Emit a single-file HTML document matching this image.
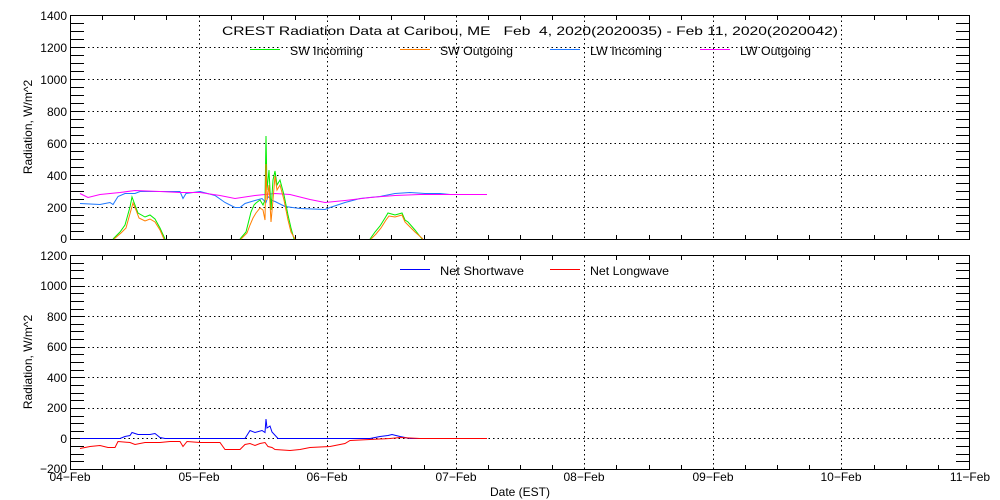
<!DOCTYPE html>
<html><head><meta charset="utf-8"><style>
html,body{margin:0;padding:0;background:#fff;}
svg{display:block;font-family:"Liberation Sans",sans-serif;font-size:12px;}
</style></head><body>
<svg id="s" width="1000" height="500" viewBox="0 0 1000 500" xmlns="http://www.w3.org/2000/svg">
<rect width="1000" height="500" fill="#fff"/>
<g id="grid"></g>
<rect x="70.5" y="15.5" width="899" height="224" fill="none" stroke="#000" stroke-width="1"/>
<rect x="70.5" y="255.5" width="899" height="214" fill="none" stroke="#000" stroke-width="1"/>
<g fill="none" stroke-width="1">
<polyline stroke="#1e78ff" points="80,203.5 100,204.5 110,202.5 113,204.5 118,196.5 125,193.5 135,193.5 140,191.5 180,191.5 183,198.5 186,193.5 200,191.5 215,195.5 225,202.5 235,207.5 240,207.5 245,203.5 255,200.5 262,198.5 266,202.5 268,196.5 272,200.5 275,201.5 285,206.5 300,208.5 325,209.5 330,207.5 345,202.5 360,198.5 380,196.5 395,193.5 410,192.5 425,193.5 440,193.5 450,194.5"/>
<polyline stroke="#ff00ff" points="80,193.5 88,197.5 100,194.5 120,192.5 135,190.5 160,191.5 180,192.5 200,192.5 220,195.5 235,198.5 255,195.5 275,193.5 290,194.5 310,199.5 325,202.5 345,200.5 370,197.5 395,195.5 420,194.5 456,194.5 487,194.5"/>
<polyline stroke="#00ee00" points="113,239 120,232 125,225 130,207 132,197 135,205 138,213 145,217 150,215 155,219 160,228 165,239"/>
<polyline stroke="#ff7f00" points="114,239 121,233 126,228 131,210 133,203 136,210 139,218 145,221 150,219 155,222 160,230 164,239"/>
<polyline stroke="#00ee00" points="240,239 246,232 249,220 251,212 254,205 256,203 260,200 263,205 265,200 266,136 267,190 269,170 271,210 273,180 275,171 277,185 280,180 284,195 288,215 291,228 294,239"/>
<polyline stroke="#ff7f00" points="241,239 247,233 250,225 253,218 256,213 260,208 263,210 265,220 266,164 267,200 269,185 271,222 273,200 275,176 277,190 280,185 284,200 288,220 291,232 295,239"/>
<polyline stroke="#00ee00" points="370,239 375,232 380,226 385,218 388,213 395,215 402,213 405,220 408,222 415,230 422,239"/>
<polyline stroke="#ff7f00" points="371,239 376,234 381,228 386,220 389,216 395,217 402,215 405,222 408,225 415,232 423,239"/>
</g>
<g fill="none" stroke-width="1">
<polyline stroke="#0000ff" points="80,438.5 120,438.5 125,436.5 130,435.5 132,432.5 138,434.5 150,434.5 155,433.5 160,437.5 165,438.5 245,438.5 250,430.5 255,432.5 262,430.5 265,432.5 266,419 267,428 270,426 272,432 278,438.5 370,438.5 380,436.5 388,435.5 392,434.5 400,436.5 410,438.5 440,438.5"/>
<polyline stroke="#ff0000" points="80,448.5 90,446.5 100,445.5 108,447.5 115,447.5 118,441.5 130,442.5 135,444.5 145,442.5 160,442.5 170,441.5 180,441.5 183,446.5 187,441.5 200,442.5 220,442.5 225,449.5 240,449.5 245,444.5 250,443.5 255,445.5 260,443.5 265,442.5 268,446.5 272,447.5 275,449.5 290,450.5 300,449.5 310,447.5 330,446.5 345,443.5 350,440.5 370,439.5 390,438.5 400,437.5 420,438.5 487,438.5"/>
</g>
<text x="222" y="35" textLength="616" lengthAdjust="spacingAndGlyphs" xml:space="preserve">CREST Radiation Data at Caribou, ME   Feb  4, 2020(2020035) - Feb 11, 2020(2020042)</text>
<g stroke-width="1">
<line x1="250" y1="49.5" x2="280" y2="49.5" stroke="#00ee00"/>
<line x1="400" y1="49.5" x2="430" y2="49.5" stroke="#ff7f00"/>
<line x1="550" y1="49.5" x2="580" y2="49.5" stroke="#1e78ff"/>
<line x1="700" y1="49.5" x2="730" y2="49.5" stroke="#ff00ff"/>
<line x1="400" y1="269.5" x2="430" y2="269.5" stroke="#0000ff"/>
<line x1="550" y1="269.5" x2="580" y2="269.5" stroke="#ff0000"/>
</g>
<text x="290" y="55" textLength="73" lengthAdjust="spacingAndGlyphs">SW Incoming</text>
<text x="440" y="55" textLength="73" lengthAdjust="spacingAndGlyphs">SW Outgoing</text>
<text x="590" y="55" textLength="72" lengthAdjust="spacingAndGlyphs">LW Incoming</text>
<text x="740" y="55" textLength="71" lengthAdjust="spacingAndGlyphs">LW Outgoing</text>
<text x="440" y="275" textLength="84" lengthAdjust="spacingAndGlyphs">Net Shortwave</text>
<text x="590" y="275" textLength="79" lengthAdjust="spacingAndGlyphs">Net Longwave</text>
<g text-anchor="end">
<text x="67" y="20">1400</text><text x="67" y="52">1200</text><text x="67" y="84">1000</text>
<text x="67" y="116">800</text><text x="67" y="148">600</text><text x="67" y="180">400</text>
<text x="67" y="212">200</text><text x="67" y="243">0</text>
<text x="67" y="260">1200</text><text x="67" y="290">1000</text><text x="67" y="321">800</text>
<text x="67" y="351">600</text><text x="67" y="382">400</text><text x="67" y="412">200</text>
<text x="67" y="443">0</text><text x="67" y="473">−200</text>
</g>
<g text-anchor="middle">
<text x="70" y="481">04−Feb</text><text x="199" y="481">05−Feb</text><text x="327" y="481">06−Feb</text>
<text x="456" y="481">07−Feb</text><text x="584" y="481">08−Feb</text><text x="713" y="481">09−Feb</text>
<text x="841" y="481">10−Feb</text><text x="970" y="481">11−Feb</text>
<text x="520" y="496">Date (EST)</text>
<text transform="translate(32,127) rotate(-90)">Radiation, W/m^2</text>
<text transform="translate(32,362) rotate(-90)">Radiation, W/m^2</text>
</g>
</svg>
<script>
(function(){
var g=document.getElementById('grid'),ns='http://www.w3.org/2000/svg';
function L(x1,y1,x2,y2,dash){var l=document.createElementNS(ns,'line');l.setAttribute('x1',x1);l.setAttribute('y1',y1);l.setAttribute('x2',x2);l.setAttribute('y2',y2);l.setAttribute('stroke','#000');l.setAttribute('stroke-width','1');if(dash)l.setAttribute('stroke-dasharray','1.5,3');g.appendChild(l);}
var dx=900/7;
for(var d=0;d<=7;d++){var x=Math.round(70+d*dx)+.5;
 if(d>0&&d<7){L(x,16,x,239,1);L(x,256,x,469,1);}
 for(var q=1;q<4&&d<7;q++){var xq=Math.round(70+d*dx+q*dx/4)+.5;L(xq,16,xq,20);L(xq,235,xq,239);L(xq,256,xq,260);L(xq,465,xq,469);}
}
for(var v=0;v<=1400;v+=50){var y=Math.round(239-v*0.16)+.5;
 if(v%200==0){if(v>0&&v<1400)L(70,y,970,y,1);}
 L(70,y,84,y);L(956,y,970,y);}
for(var v=-200;v<=1200;v+=50){var y=Math.round(469-(v+200)*214/1400)+.5;
 if(v%200==0){if(v>-200&&v<1200)L(70,y,970,y,1);}
 L(70,y,84,y);L(956,y,970,y);}
})();
</script>
</body></html>
